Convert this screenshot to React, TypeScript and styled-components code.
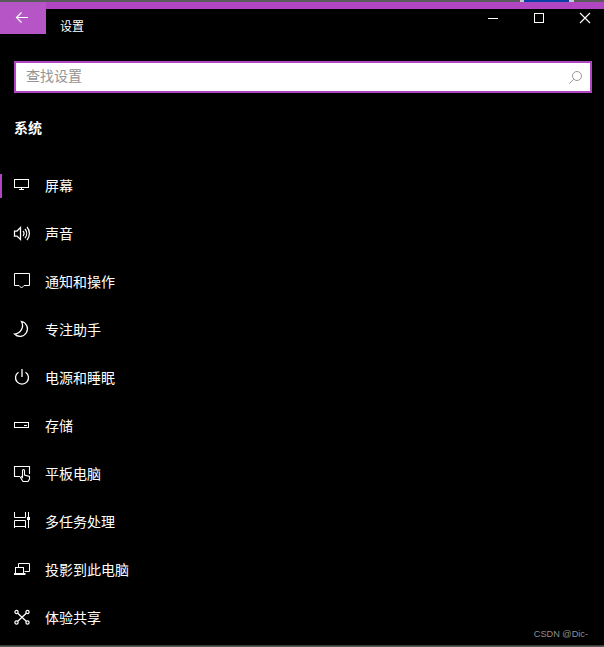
import React from "react";
import styled, { createGlobalStyle } from "styled-components";

const accent = "#b146c2";

const GlobalStyle = createGlobalStyle`
  html, body {
    margin: 0;
    padding: 0;
    background: #000;
  }
`;

const Page = styled.div`
  position: relative;
  display: flex;
  flex-direction: column;
  width: 604px;
  height: 647px;
  overflow: hidden;
  background: #000;
  color: #fff;
  font-family: "Noto Sans CJK SC", "Noto Sans", sans-serif;
`;

const TopEdge = styled.div`
  flex: none;
  height: 2px;
  background: linear-gradient(
    to right,
    #5a5a5a 520px,
    #c8c8c8 520px,
    #c8c8c8 524px,
    #0c3fa6 524px,
    #0c3fa6 569px,
    #c8c8c8 569px,
    #c8c8c8 574px,
    #5a5a5a 574px
  );
`;

const TitleBar = styled.header`
  flex: none;
  display: flex;
  height: 32px;
  background: linear-gradient(${accent} 7px, #000 7px);
`;

const BackButton = styled.div`
  display: flex;
  align-items: center;
  justify-content: center;
  width: 46px;
  padding-right: 2px;
  box-sizing: border-box;
  background: #b655c6;
`;

const Title = styled.span`
  margin: 15px 0 0 14px;
  font-size: 12px;
  line-height: 18px;
`;

const WindowControls = styled.div`
  display: flex;
  margin-left: auto;
  margin-right: -4px;
`;

const WindowButton = styled.div`
  display: flex;
  align-items: center;
  justify-content: center;
  width: 46px;
`;

const Content = styled.main`
  display: flex;
  flex-direction: column;
  padding: 27px 12px 0 14px;
`;

const SearchBox = styled.div`
  display: flex;
  align-items: center;
  justify-content: space-between;
  box-sizing: border-box;
  height: 32px;
  padding: 0 8px 0 10px;
  background: #fff;
  border: 2px solid ${accent};
`;

const SearchHint = styled.span`
  margin-bottom: 4px;
  color: #949494;
  font-size: 14px;
  line-height: 20px;
`;

const SectionTitle = styled.h2`
  margin: 24px 0 0;
  font-size: 14px;
  font-weight: 700;
  line-height: 20px;
`;

const NavList = styled.nav`
  display: flex;
  flex-direction: column;
  margin: 25px 0 0 -14px;
`;

const NavRow = styled.div<{ $active?: boolean }>`
  position: relative;
  display: flex;
  align-items: center;
  gap: 15px;
  height: 48px;
  padding-left: 14px;
  font-size: 14px;

  &::before {
    content: "";
    display: ${(p) => (p.$active ? "block" : "none")};
    position: absolute;
    left: 0;
    top: 12px;
    width: 2px;
    height: 24px;
    background: ${accent};
  }
`;

const NavLabel = styled.span`
  margin-bottom: 2px;
`;

const Icon = styled.svg<{ $weight?: number; $color?: string }>`
  flex: none;
  overflow: visible;
  fill: none;
  stroke: ${(p) => p.$color ?? "#fff"};
  stroke-width: ${(p) => p.$weight ?? 1};
`;

const BottomEdge = styled.div`
  flex: none;
  height: 2px;
  margin-top: auto;
  background: linear-gradient(#2a2a2a, #6a6a6a);
`;

const Watermark = styled.span`
  position: absolute;
  right: 16px;
  bottom: 7px;
  color: #8f8f8f;
  font-family: "Liberation Sans", Arial, sans-serif;
  font-size: 9.2px;
  line-height: 12px;
`;

const items = [
  {
    label: "屏幕",
    active: true,
    icon: (
      <>
        <rect x="0.5" y="1.5" width="14" height="8" />
        <path d="M7.5 9.5V12M5 11.5H10" />
      </>
    ),
  },
  {
    label: "声音",
    weight: 1.25,
    icon: (
      <path d="M0.5 5H3L6.5 1.5V13.5L3 10H0.5ZM9 5A3.5 3.5 0 0 1 9 10M11 3A7 7 0 0 1 11 12M13 1A10 10 0 0 1 13 14" />
    ),
  },
  {
    label: "通知和操作",
    icon: <path d="M0.5 -0.5H15.5V11.5H10L7.5 14L5 11.5H0.5Z" />,
  },
  {
    label: "专注助手",
    weight: 1.25,
    icon: <path d="M7.5 -0.5A7.5 7.5 0 1 1 0.5 12A8.5 8.5 0 0 0 7.5 -0.5Z" />,
  },
  {
    label: "电源和睡眠",
    weight: 1.3,
    icon: <path d="M4.5 2.2A6.5 6.5 0 1 0 11.5 2.2M8 -1V7" />,
  },
  {
    label: "存储",
    icon: (
      <>
        <rect x="0.5" y="4.5" width="14" height="5" />
        <path d="M10 7.5H13" />
      </>
    ),
  },
  {
    label: "平板电脑",
    weight: 1.1,
    icon: (
      <path d="M6 10.5H0.5V0.5H15.5V8M9 15.5L6.5 11.5L7.5 10.5L8.5 11.5V4.5A1 1 0 0 1 10.5 4.5V9L15.5 10.5V13L14 15.5Z" />
    ),
  },
  {
    label: "多任务处理",
    icon: (
      <>
        <path d="M0.5 -2V3.5H11.5V-2M0.5 14V6.5H11.5V14M0.5 12.5H11.5M14.5 -2V3M14.5 6V14" />
        <rect x="13.5" y="3.5" width="2" height="2" fill="#fff" />
      </>
    ),
  },
  {
    label: "投影到此电脑",
    icon: (
      <>
        <path d="M4.5 5V1.5H15.5V9.5H10.5" />
        <rect x="1.5" y="5.5" width="8" height="6" />
        <rect x="0.5" y="11.5" width="10.5" height="1" />
      </>
    ),
  },
  {
    label: "体验共享",
    weight: 1.25,
    icon: (
      <>
        <circle cx="2.5" cy="2" r="1.6" />
        <circle cx="13.5" cy="2" r="1.6" />
        <circle cx="2.5" cy="12.5" r="1.6" />
        <circle cx="13.5" cy="12.5" r="1.6" />
        <path d="M3.7 3.2L12.3 11.3M12.3 3.2L3.7 11.3" />
      </>
    ),
  },
];

export default function App() {
  return (
    <Page>
      <GlobalStyle />
      <TopEdge />
      <TitleBar>
        <BackButton>
          <Icon width="12" height="12" viewBox="0 0 12 12" $weight={1.2}>
            <path d="M0.5 5.5H12M5.5 0.5L0.5 5.5L5.5 10.5" />
          </Icon>
        </BackButton>
        <Title>设置</Title>
        <WindowControls>
          <WindowButton>
            <Icon width="10" height="10" viewBox="0 0 10 10">
              <path d="M0 5.5H10" />
            </Icon>
          </WindowButton>
          <WindowButton>
            <Icon width="10" height="10" viewBox="0 0 10 10">
              <rect x="0.5" y="0.5" width="9" height="9" />
            </Icon>
          </WindowButton>
          <WindowButton>
            <Icon width="10" height="10" viewBox="0 0 10 10" $weight={1.1}>
              <path d="M0 0L10 10M10 0L0 10" />
            </Icon>
          </WindowButton>
        </WindowControls>
      </TitleBar>
      <Content>
        <SearchBox>
          <SearchHint>查找设置</SearchHint>
          <Icon width="13" height="13" viewBox="0 0 13 13" $color="#999">
            <circle cx="8" cy="5" r="4.5" />
            <path d="M4.8 8.2L0.5 12.5" />
          </Icon>
        </SearchBox>
        <SectionTitle>系统</SectionTitle>
        <NavList>
          {items.map((item) => (
            <NavRow key={item.label} $active={item.active}>
              <Icon width="16" height="16" viewBox="0 0 16 16" $weight={item.weight}>
                {item.icon}
              </Icon>
              <NavLabel>{item.label}</NavLabel>
            </NavRow>
          ))}
        </NavList>
      </Content>
      <BottomEdge />
      <Watermark>CSDN @Dic-</Watermark>
    </Page>
  );
}
